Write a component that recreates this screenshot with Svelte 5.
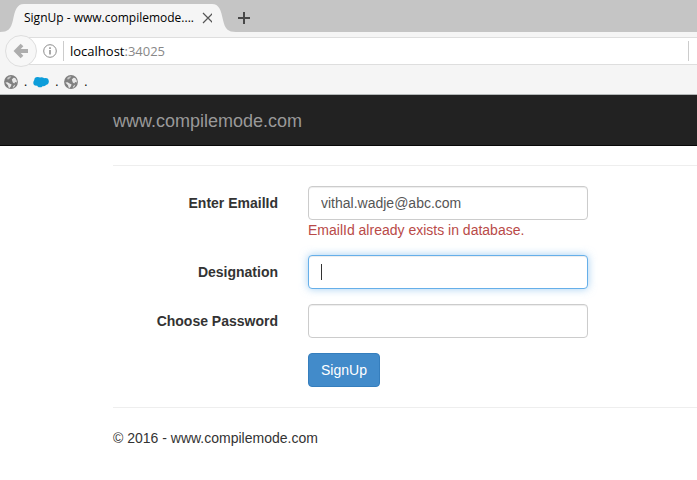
<script>
    import { onMount } from 'svelte';

    let url = $state('localhost:34025');
    let email = $state('vithal.wadje@abc.com');
    let designation = $state('');
    let password = $state('');
    let designationInput;

    const bookmarks = ['globe', 'cloud', 'globe'];

    // host is drawn dark, the port after it is dimmed
    let host = $derived(url.split(':')[0]);
    let port = $derived(url.slice(host.length));

    let emailError = $derived(email === 'vithal.wadje@abc.com' ? 'EmailId already exists in database.' : '');

    onMount(() => designationInput.focus());

    function signUp(event) {
        event.preventDefault();
    }
</script>

<div class="browser">
    <div class="tab-strip">
        <svg class="tab-edge" viewBox="0 0 24 28">
            <path d="M0 28 C8 28 11 25 13 16 C15 6 17 0 24 0 V28 Z" fill="#f5f5f5" />
        </svg>
        <div class="tab">
            <span class="tab-title">SignUp - www.compilemode....</span>
            <button class="icon-btn" aria-label="Close tab">
                <svg width="12" height="12" viewBox="0 0 12 12">
                    <path d="M1 1 L11 11 M11 1 L1 11" stroke="#555" stroke-width="1.200" />
                </svg>
            </button>
        </div>
        <svg class="tab-edge" viewBox="0 0 24 28">
            <path d="M24 28 C16 28 13 25 11 16 C9 6 7 0 0 0 V28 Z" fill="#f5f5f5" />
        </svg>
        <button class="icon-btn" aria-label="New tab">
            <svg width="12" height="12" viewBox="0 0 12 12">
                <path d="M6 0 V12 M0 6 H12" stroke="#484848" stroke-width="2" />
            </svg>
        </button>
    </div>

    <div class="nav-bar">
        <button class="back" aria-label="Back">
            <svg width="16" height="16" viewBox="0 0 16 16" fill="none" stroke="#adadad" stroke-width="3.800">
                <path d="M9 2 L3.200 8 L9 14 M3.500 8 H15" />
            </svg>
        </button>
        <div class="address">
            <svg width="14" height="14" viewBox="0 0 14 14">
                <circle cx="7" cy="7" r="6.300" fill="none" stroke="#8c8c8c" />
                <path d="M7 6 V10.500 M7 3.300 V4.900" stroke="#8c8c8c" stroke-width="1.500" />
            </svg>
            <span class="divider"></span>
            <span class="url"><span class="host">{host}</span>{port}</span>
            <span class="divider"></span>
        </div>
    </div>

    <div class="bookmarks">
        {#each bookmarks as icon}
            <a href="/" class="bookmark">
                {#if icon === 'globe'}
                    <svg width="14" height="14" viewBox="0 0 14 14">
                        <circle cx="7" cy="7" r="6.900" fill="#808080" />
                        <path d="M3.200 3 L5 1.800 L7.400 1.300 L6.600 2.600 L4.800 4.200 L3.600 4.600 Z" fill="#c4c4c4" />
                        <path d="M7.800 4.600 L9.500 2.800 L11.200 2.900 L12.700 5.400 L12.900 7.400 L11.200 7 L10.200 8.600 L8.800 7.600 Z" fill="#e8e8e8" />
                        <path d="M1.400 7.600 L3.600 7.300 L5.600 8.600 L7.600 9.600 L6.800 11.400 L5.600 12.900 L4.600 12.400 L4 10.200 Z M9.400 11 L11.400 9.600 L10.200 11.900 L8.800 12.700 Z" fill="#e8e8e8" />
                    </svg>
                {:else}
                    <svg width="16" height="14" viewBox="0 0 16 14">
                        <g fill="#0d9dda">
                            <circle cx="4.600" cy="5.200" r="3.300" />
                            <circle cx="3.300" cy="7.800" r="3" />
                            <circle cx="8.500" cy="5.400" r="3.200" />
                            <circle cx="7" cy="9.200" r="3.100" />
                            <circle cx="12.400" cy="6.400" r="3.400" />
                            <circle cx="10.300" cy="8.200" r="3" />
                        </g>
                    </svg>
                {/if}
                <span>.</span>
            </a>
        {/each}
    </div>
</div>

<header class="navbar">
    <a href="/" class="brand">www.compilemode.com</a>
</header>

<main class="container">
    <hr />
    <form onsubmit={signUp}>
        <div class="form-group">
            <label for="email">Enter EmailId</label>
            <div class="field">
                <input id="email" type="text" bind:value={email} />
                {#if emailError}
                    <span class="error">{emailError}</span>
                {/if}
            </div>
        </div>
        <div class="form-group">
            <label for="designation">Designation</label>
            <div class="field caret">
                <input id="designation" type="text" bind:value={designation} bind:this={designationInput} />
            </div>
        </div>
        <div class="form-group">
            <label for="password">Choose Password</label>
            <div class="field">
                <input id="password" type="password" bind:value={password} />
            </div>
        </div>
        <div class="form-group">
            <span></span>
            <div class="field">
                <button type="submit" class="submit">SignUp</button>
            </div>
        </div>
    </form>
    <hr />
    <footer>&copy; 2016 - www.compilemode.com</footer>
</main>

<style>
    :global(body) {
        background: #fff;
        color: #333;
        font-family: "Liberation Sans", Arial, sans-serif;
        font-size: 14px;
        line-height: 20px;
    }

    /* Browser chrome */
    .browser {
        background: #f5f5f5;
        border-bottom: 1px solid #b4b8b8;
        color: #000;
        font-family: "Open Sans", "Noto Sans", sans-serif;
        font-size: 12px;
    }
    .tab-strip {
        display: flex;
        height: 28px;
        padding-top: 4px;
        background: #c5c5c5;
    }
    .tab-edge {
        flex: none;
        width: 24px;
        height: 28px;
    }
    .tab {
        display: flex;
        align-items: center;
        justify-content: space-between;
        width: 188px;
        background: #f5f5f5;
    }
    .tab-title {
        flex: 1;
        min-width: 0;
        white-space: nowrap;
    }
    .icon-btn {
        display: flex;
        align-items: center;
        padding: 0 0 0 2px;
        border: none;
        background: none;
        cursor: pointer;
    }
    .tab .icon-btn {
        margin-right: -2px;
    }
    .nav-bar {
        display: flex;
        align-items: center;
        height: 38px;
        padding-left: 5px;
    }
    .back {
        position: relative;
        z-index: 1;
        display: flex;
        align-items: center;
        justify-content: center;
        flex: none;
        width: 32px;
        height: 32px;
        padding: 0;
        border: 1px solid #dedede;
        border-radius: 50%;
        background: #f7f7f7;
    }
    .address {
        display: flex;
        align-items: center;
        flex: 1;
        gap: 6px;
        height: 26px;
        margin-left: -8px;
        padding: 0 8px 0 13px;
        border: 1px solid #dedede;
        border-right: none;
        background: #fff;
    }
    .divider {
        width: 1px;
        height: 20px;
        background: #ccc;
    }
    .url {
        flex: 1;
        color: #888;
        font-size: 13px;
    }
    .host {
        color: #000;
    }
    .bookmarks {
        display: flex;
        align-items: center;
        gap: 6px;
        height: 24px;
        padding-left: 4px;
    }
    .bookmark {
        display: flex;
        align-items: center;
        gap: 6px;
        color: #000;
        text-decoration: none;
    }

    /* Page */
    .navbar {
        padding: 16px 0 14px 113px;
        border-bottom: 1px solid #080808;
        background: #222;
    }
    .brand {
        display: block;
        color: #999;
        font-size: 18px;
        text-decoration: none;
    }
    .container {
        padding-left: 113px;
    }
    hr {
        margin: 20px 0;
        border: 0;
        border-top: 1px solid #eee;
    }
    hr:first-child {
        margin-top: 19px;
    }
    .form-group {
        display: grid;
        grid-template-columns: 165px minmax(0, 280px);
        column-gap: 30px;
        margin-bottom: 15px;
    }
    .form-group:last-child {
        margin-bottom: 0;
    }
    label {
        padding-top: 7px;
        font-weight: bold;
        text-align: right;
    }
    .field {
        position: relative;
    }
    input {
        display: block;
        box-sizing: border-box;
        width: 100%;
        height: 34px;
        padding: 6px 12px;
        border: 1px solid #ccc;
        border-radius: 4px;
        background: #fff;
        box-shadow: inset 0 1px 1px rgba(0, 0, 0, 0.075);
        color: #555;
        font: inherit;
    }
    input:focus {
        border-color: #66afe9;
        outline: 0;
        box-shadow: inset 0 1px 1px rgba(0, 0, 0, 0.075), 0 0 8px rgba(102, 175, 233, 0.6);
    }
    .caret input {
        caret-color: transparent;
    }
    .caret:focus-within::after {
        content: "";
        position: absolute;
        top: 9px;
        left: 13px;
        width: 1px;
        height: 16px;
        background: #333;
    }
    .error {
        display: block;
        color: #b94a48;
    }
    .submit {
        display: block;
        padding: 6px 12px;
        border: 1px solid #357ebd;
        border-radius: 4px;
        background: #428bca;
        color: #fff;
        font: inherit;
        cursor: pointer;
    }
</style>
